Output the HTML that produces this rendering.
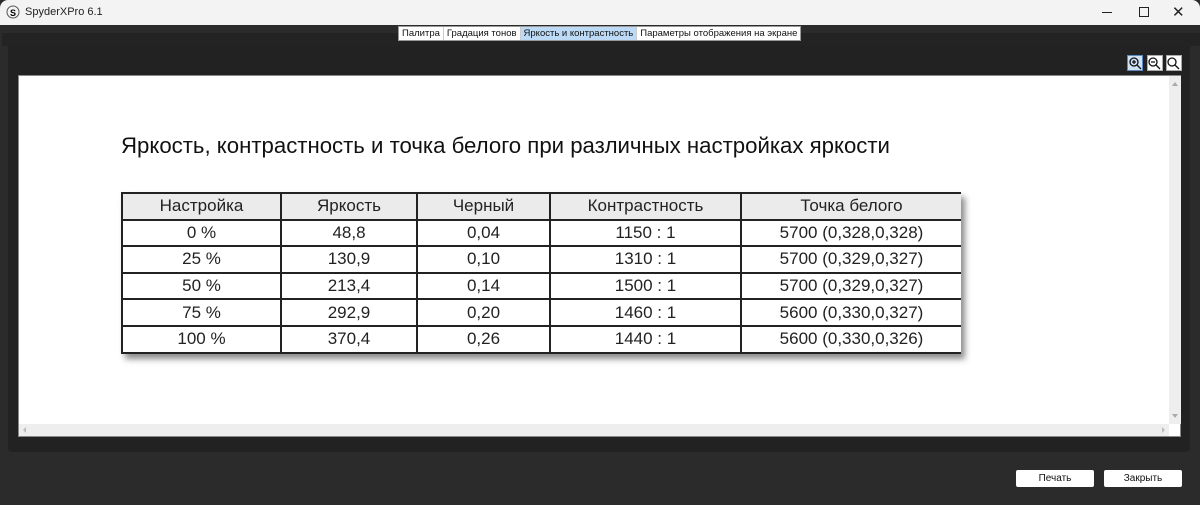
<!DOCTYPE html>
<html><head><meta charset="utf-8"><style>
*{margin:0;padding:0;box-sizing:border-box}
body{width:1200px;height:505px;background:#2b2b2b;position:relative;overflow:hidden;font-family:"Liberation Sans",sans-serif}
.abs{position:absolute}
#tb{left:0;top:0;width:1200px;height:25px;background:#f3f3f3;border-radius:8px 8px 0 0}
#tb .t{left:25px;top:6px;font-size:11px;color:#222}
#strip{left:2px;top:33px;width:1198px;height:13px;background:#232323}
#panel{left:8px;top:46px;width:1182px;height:406px;background:#222;border-radius:0 0 4px 4px}
#content{left:18px;top:75px;width:1163px;height:362px;background:#fff;border:1px solid #888}
#hs{left:19px;top:424px;width:1150px;height:12px;background:#eeeeee}
#vs{left:1169px;top:76px;width:12px;height:348px;background:#eeeeee}
.tabs{left:398px;top:26px;height:15px;display:flex;font-size:9.5px;color:#111;background:#fff;border:1px solid #999}
.tabs div{padding:1px 3px;border-right:1px solid #ccc;white-space:nowrap}
.tabs .a{background:#bcdaf6}
h1{position:absolute;left:121px;top:133px;font-size:22.2px;font-weight:normal;color:#111;white-space:nowrap}
table{position:absolute;left:121px;top:192px;border-collapse:collapse;font-size:17px;color:#222;box-shadow:4px 5px 6px rgba(0,0,0,.45)}
td{border:2px solid #222;height:26.6px;text-align:center;padding:0}
tr:first-child td{background:#ebebeb}
.btn{top:470px;width:78px;height:17px;background:#fff;border-radius:2px;font-size:10px;text-align:center;line-height:17px;color:#111}
.zb{top:55px;width:16px;height:16px;background:#fff;border:1px solid #aaa}
</style></head><body>
<div id="tb" class="abs">
<svg class="abs" style="left:6px;top:5px" width="14" height="14"><circle cx="7" cy="7" r="6" fill="none" stroke="#555"/><text x="4" y="11" font-size="9" font-weight="bold" font-family="Liberation Sans">S</text></svg>
<div class="abs t">SpyderXPro 6.1</div>
<div class="abs" style="left:1102px;top:12px;width:10px;height:1px;background:#222"></div>
<div class="abs" style="left:1139px;top:7px;width:10px;height:10px;border:1px solid #222"></div>
<div class="abs" style="left:1172px;top:3px;font-size:15px;color:#222">✕</div>
</div>
<div id="strip" class="abs"></div>
<div id="panel" class="abs"></div>
<div class="abs tabs"><div>Палитра</div><div>Градация тонов</div><div class="a">Яркость и контрастность</div><div style="border:none">Параметры отображения на экране</div></div>
<div class="abs zb" style="left:1127px;border-color:#5a8ac0;background:#cfe2f5"></div>
<div class="abs zb" style="left:1147px"></div>
<div class="abs zb" style="left:1166px"></div>
<svg class="abs" style="left:1127px;top:55px" width="60" height="16" font-family="Liberation Sans"><g fill="none" stroke="#111" stroke-width="1.3"><circle cx="7" cy="7" r="4"/><path d="M10 10l4 4M5 7h4M7 5v4"/><circle cx="26" cy="7" r="4"/><path d="M29 10l4 4M24 7h4"/><circle cx="45" cy="7" r="4"/><path d="M48 10l4 4"/></g></svg>
<div id="content" class="abs"></div>
<div id="vs" class="abs"><div class="abs" style="left:3px;top:6px;border:3px solid transparent;border-bottom:4px solid #aaa;border-top:0"></div><div class="abs" style="left:3px;bottom:6px;border:3px solid transparent;border-top:4px solid #aaa;border-bottom:0"></div></div>
<div id="hs" class="abs"><div class="abs" style="left:4px;top:3px;border:3px solid transparent;border-right:3px solid #bbb;border-left:0"></div><div class="abs" style="right:4px;top:3px;border:3px solid transparent;border-left:3px solid #bbb;border-right:0"></div></div>
<h1>Яркость, контрастность и точка белого при различных настройках яркости</h1>
<table>
<tr><td style="width:159px">Настройка</td><td style="width:136px">Яркость</td><td style="width:133px">Черный</td><td style="width:191px">Контрастность</td><td style="width:220px;border-right:none">Точка белого</td></tr>
<tr><td>0 %</td><td>48,8</td><td>0,04</td><td>1150 : 1</td><td style="border-right:none">5700 (0,328,0,328)</td></tr>
<tr><td>25 %</td><td>130,9</td><td>0,10</td><td>1310 : 1</td><td style="border-right:none">5700 (0,329,0,327)</td></tr>
<tr><td>50 %</td><td>213,4</td><td>0,14</td><td>1500 : 1</td><td style="border-right:none">5700 (0,329,0,327)</td></tr>
<tr><td>75 %</td><td>292,9</td><td>0,20</td><td>1460 : 1</td><td style="border-right:none">5600 (0,330,0,327)</td></tr>
<tr><td>100 %</td><td>370,4</td><td>0,26</td><td>1440 : 1</td><td style="border-right:none">5600 (0,330,0,326)</td></tr>
</table>
<div class="abs btn" style="left:1016px">Печать</div>
<div class="abs btn" style="left:1104px">Закрыть</div>
</body></html>
